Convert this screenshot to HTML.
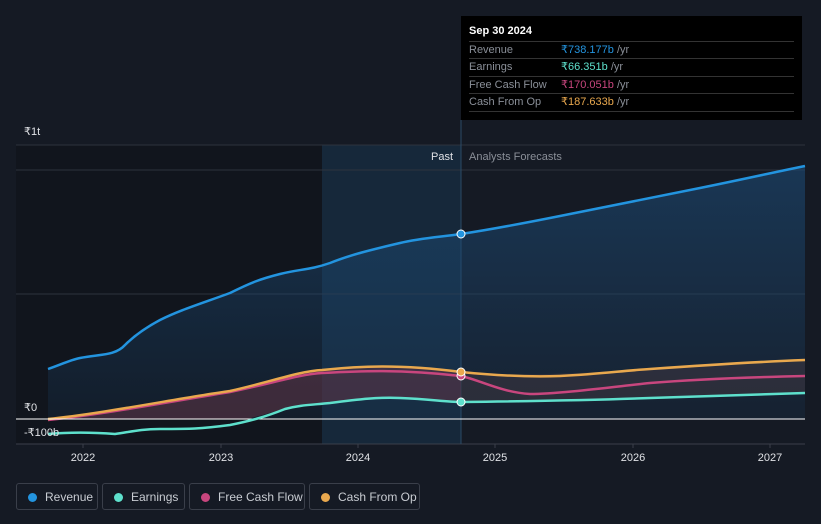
<!DOCTYPE html><html><head><meta charset="utf-8"><style>
body{margin:0;width:821px;height:524px;background:#151a24;font-family:"Liberation Sans",sans-serif;overflow:hidden;position:relative}
.tt{position:absolute;left:461px;top:16px;width:341px;height:104px;background:#000;color:#fff;font-size:11px}
.tt .h{position:absolute;left:8px;top:9px;font-weight:bold;font-size:11px}
.row{position:absolute;left:8px;width:325px;border-top:1px solid #333;height:17px;line-height:17px;color:#8a8f98}
.row span{position:absolute;left:92px}
.row i{font-style:normal;color:#8a8f98}
.leg{position:absolute;top:483px;height:27px;border:1px solid #3a3f4a;border-radius:3px;color:#c8ccd2;font-size:12px;line-height:27px;box-sizing:border-box}
.leg b{position:absolute;left:11px;top:9px;width:9px;height:9px;border-radius:50%}
.leg span{position:absolute;left:28px}
</style></head><body>
<svg width="821" height="524" style="position:absolute;left:0;top:0" font-family="Liberation Sans" font-size="11">
<rect x="16" y="145" width="306" height="299" fill="#11151d"/>
<rect x="322" y="145" width="139" height="299" fill="#16283a"/>
<line x1="16" y1="145" x2="805" y2="145" stroke="#2d333d"/>
<line x1="16" y1="170" x2="805" y2="170" stroke="#2d333d"/>
<line x1="16" y1="294" x2="805" y2="294" stroke="#2d333d"/>
<line x1="16" y1="444" x2="805" y2="444" stroke="#3a3f4a"/>
<line x1="461" y1="120" x2="461" y2="444" stroke="#2b4a66"/>
<defs><linearGradient id="g" x1="0" y1="0" x2="0" y2="1"><stop offset="0" stop-color="#1c4a75" stop-opacity=".6"/><stop offset="1" stop-color="#1c4a75" stop-opacity=".15"/></linearGradient></defs>
<path d="M48,369 C60,365 70,360 80,358 C100,354 115,356 125,345 C135,335 145,328 160,320 C180,310 200,304 230,293 C250,283 260,279 280,274 C300,269 310,270 330,263 C350,255 370,250 400,243 C420,238 440,237 461,234 C500,228 530,222 560,216 C600,208 650,198 700,188 C740,180 780,171 805,166 L805,419 L48,419Z" fill="url(#g)"/>
<path d="M48,419 C100,414 180,398 230,391 C270,382 300,371 322,370 C360,366 400,364 461,372 L461,402 C420,398 390,397 360,400 C320,404 300,406 285,409 C270,412 250,420 240,419Z" fill="#5a3445" opacity=".6"/>
<path d="M461,372 C500,376 560,375 650,369 C720,364 780,361 805,360 L805,393 C720,396 600,400 461,402Z" fill="#3a3540" opacity=".6"/>
<path d="M48,369 C60,365 70,360 80,358 C100,354 115,356 125,345 C135,335 145,328 160,320 C180,310 200,304 230,293 C250,283 260,279 280,274 C300,269 310,270 330,263 C350,255 370,250 400,243 C420,238 440,237 461,234 C500,228 530,222 560,216 C600,208 650,198 700,188 C740,180 780,171 805,166" fill="none" stroke="#2394df" stroke-width="2.5"/>
<path d="M48,420 C100,415 180,400 230,392 C270,384 300,374 322,373 C360,371 400,369 461,376 C480,380 500,392 530,394 C560,394 620,386 650,383 C700,379 760,377 805,376" fill="none" stroke="#c8467e" stroke-width="2.5"/>
<path d="M48,419 C100,414 180,398 230,391 C270,382 300,371 322,370 C360,366 400,364 461,372 C500,376 530,377 560,376 C600,374 620,371 650,369 C720,364 780,361 805,360" fill="none" stroke="#e9a84e" stroke-width="2.5"/>
<line x1="16" y1="419" x2="805" y2="419" stroke="#fff" stroke-width="1"/>
<path d="M48,434 C70,432 90,432 115,434 C130,432 140,429 160,429 C190,429 200,429 230,425 C250,421 265,417 285,409 C300,405 310,405 330,403 C360,399 380,397 400,398 C430,399 445,402 461,402 C550,401 600,400 650,398 C720,396 770,394 805,393" fill="none" stroke="#5ee0cc" stroke-width="2.5"/>
<circle cx="461" cy="234" r="4" fill="#2394df" stroke="#fff" stroke-width="1"/>
<circle cx="461" cy="376" r="4" fill="#c8467e" stroke="#fff" stroke-width="1"/>
<circle cx="461" cy="372" r="4" fill="#e9a84e" stroke="#fff" stroke-width="1"/>
<circle cx="461" cy="402" r="4" fill="#5ee0cc" stroke="#fff" stroke-width="1"/>
<text x="24" y="135" fill="#e0e2e6">₹1t</text>
<text x="24" y="411" fill="#e0e2e6">₹0</text>
<text x="24" y="436" fill="#e0e2e6">-₹100b</text>
<text x="453" y="160" fill="#e0e2e6" text-anchor="end">Past</text>
<text x="469" y="160" fill="#8a8f98">Analysts Forecasts</text>
<g fill="#e0e2e6" text-anchor="middle"><text x="83" y="461">2022</text><text x="221" y="461">2023</text><text x="358" y="461">2024</text><text x="495" y="461">2025</text><text x="633" y="461">2026</text><text x="770" y="461">2027</text></g>
<g stroke="#3a3f4a"><line x1="83" y1="444" x2="83" y2="448"/><line x1="221" y1="444" x2="221" y2="448"/><line x1="358" y1="444" x2="358" y2="448"/><line x1="495" y1="444" x2="495" y2="448"/><line x1="633" y1="444" x2="633" y2="448"/><line x1="770" y1="444" x2="770" y2="448"/></g>
</svg>
<div class="tt"><div class="h">Sep 30 2024</div>
<div class="row" style="top:25px">Revenue<span><b style="font-weight:normal;color:#2394df">₹738.177b</b> <i>/yr</i></span></div>
<div class="row" style="top:42px">Earnings<span><b style="font-weight:normal;color:#5ee0cc">₹66.351b</b> <i>/yr</i></span></div>
<div class="row" style="top:60px">Free Cash Flow<span><b style="font-weight:normal;color:#c8467e">₹170.051b</b> <i>/yr</i></span></div>
<div class="row" style="top:77px;border-bottom:1px solid #333">Cash From Op<span><b style="font-weight:normal;color:#e9a84e">₹187.633b</b> <i>/yr</i></span></div>
</div>
<div class="leg" style="left:16px;width:82px"><b style="background:#2394df"></b><span>Revenue</span></div>
<div class="leg" style="left:102px;width:83px"><b style="background:#5ee0cc"></b><span>Earnings</span></div>
<div class="leg" style="left:189px;width:116px"><b style="background:#c8467e"></b><span>Free Cash Flow</span></div>
<div class="leg" style="left:309px;width:111px"><b style="background:#e9a84e"></b><span>Cash From Op</span></div>
</body></html>
